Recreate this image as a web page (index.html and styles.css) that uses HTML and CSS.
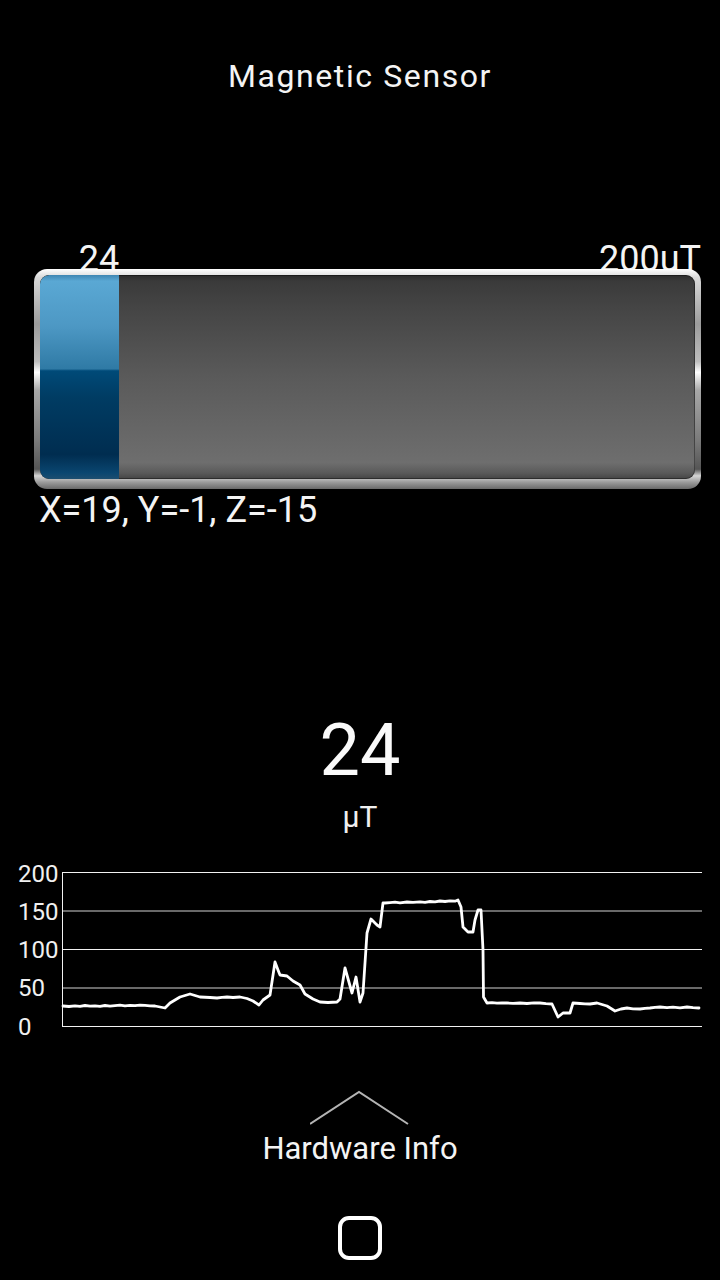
FILE: index.html
```html
<!DOCTYPE html>
<html>
<head>
<meta charset="utf-8">
<title>Magnetic Sensor</title>
<link rel="stylesheet" href="styles.css">
</head>
<body>
<main class="screen">
  <h1 class="title">Magnetic Sensor</h1>

  <section class="meter">
    <div class="meter-labels">
      <span class="meter-value" style="width:12%">24</span>
      <span class="meter-max">200uT</span>
    </div>
    <div class="frame">
      <div class="track">
        <div class="fill" style="width:12%"></div>
      </div>
    </div>
    <div class="axes">X=19, Y=-1, Z=-15</div>
  </section>

  <section class="reading">
    <div class="reading-value">24</div>
    <div class="reading-unit">µT</div>
  </section>

  <svg class="chart" viewBox="0 855 720 185" width="720" height="185">
    <g class="chart-labels">
      <text x="18" y="882">200</text>
      <text x="18" y="920">150</text>
      <text x="18" y="958">100</text>
      <text x="18" y="996">50</text>
      <text x="18" y="1035">0</text>
    </g>
    <line class="grid-major" x1="62" y1="872.5" x2="702" y2="872.5"/>
    <line class="grid-minor" x1="62" y1="911" x2="702" y2="911"/>
    <line class="grid-major" x1="62" y1="949.5" x2="702" y2="949.5"/>
    <line class="grid-minor" x1="62" y1="988" x2="702" y2="988"/>
    <line class="grid-major" x1="62" y1="1026.5" x2="702" y2="1026.5"/>
    <line class="grid-major" x1="62.5" y1="872" x2="62.5" y2="1027"/>
    <polyline class="trace" points="63,1006 69,1006.5 75,1005.8 80,1006.4 85,1005.5 90,1006.2 95,1005.8 100,1006.3 105,1005.5 110,1006.1 115,1005.7 120,1005.2 125,1005.8 130,1005.3 135,1005.7 140,1005.1 145,1005.4 150,1005.8 155,1006 160,1007 165,1008 170,1003 180,997 185,995.5 190,994 195,995.5 200,997 210,997.5 217,998 222,997.3 227,997 233,997.5 240,997 247,998.5 253,1001 259,1005 263,1000 270,995 275,962 278,970 280,975 287,976 293,981 300,985 305,994 313,999 320,1002 328,1002.5 337,1002 340,999 345,968 352,993 356,977 360,1002 363,993 367,933 371,919 377,925 380,927 383,903 385,903 390,902.6 395,902.2 400,902.8 407,902 413,902.4 420,901.8 425,902.3 430,901.5 435,901.9 440,901 445,901.5 450,900.8 455,901.2 458,900 461,907 463,927 468,932 473,932 475,920 478,910 481,910 483,950 483.5,997 487,1003 492,1002.6 497,1003.1 502,1002.8 507,1003 513,1003.4 520,1003 527,1003.5 534,1002.9 540,1003 546,1003.6 552,1004 558,1017 563,1013 570,1013 573,1003 580,1003.5 585,1003.9 590,1004 597,1003 602,1004.5 607,1006 615,1011 621,1009 627,1008 633,1008.8 640,1009 645,1008.3 650,1008 655,1007.4 660,1007 667,1007.6 673,1007.2 680,1007.8 687,1007 693,1007.6 699,1008"/>
  </svg>

  <section class="drawer">
    <svg class="chevron" viewBox="0 0 100 40" width="100" height="40">
      <polyline points="0,36 49,4 98,36"/>
    </svg>
    <div class="drawer-label">Hardware Info</div>
  </section>

  <nav class="navbar">
    <div class="home-btn"></div>
  </nav>
</main>
</body>
</html>
```

FILE: styles.css
```css
html, body {
  margin: 0;
  padding: 0;
  background: #000;
}

body {
  font-family: Roboto, "Noto Sans", "Liberation Sans", sans-serif;
  color: #fff;
  width: 720px;
  height: 1280px;
  overflow: hidden;
}

.screen {
  display: flex;
  flex-direction: column;
}

.title {
  margin: 56px 0 0;
  font-size: 32px;
  line-height: 40px;
  font-weight: 400;
  letter-spacing: 1.6px;
  text-align: center;
  color: #f4f4f4;
}

/* meter */
.meter {
  display: flex;
  flex-direction: column;
}

.meter-labels {
  margin: 143px 19px 0 40px;
  display: flex;
  justify-content: space-between;
  font-size: 36px;
  line-height: 40px;
  color: #f4f4f4;
}

.meter-value {
  text-align: right;
}

.frame {
  position: relative;
  margin: -10px 19px 0 34px;
  height: 220px;
  box-sizing: border-box;
  padding: 6px 6px 10px 6px;
  border-radius: 13px;
  background: linear-gradient(to bottom,
    #ffffff 0%, #d8d8d8 4%, #9c9c9c 25%, #bdbdbd 42%,
    #ffffff 47%, #a8a8a8 55%, #7a7a7a 78%,
    #555 91%, #d6d6d6 94%, #9a9a9a 97%, #6a6a6a 100%);
}

.track {
  height: 100%;
  border-radius: 9px;
  overflow: hidden;
  background: linear-gradient(to bottom, #2c2c2c 0%, #3a3a3a 3%, #444 15%, #5a5a5a 50%, #6e6e6e 92%, #5a5a5a 97%, #444 100%);
  box-shadow: inset 0 0 0 1px rgba(0, 0, 0, 0.35);
}

.fill {
  height: 100%;
  border-radius: 9px 0 0 9px;
  background: linear-gradient(to bottom,
    #3f86b2 0%, #5aa8d4 3%, #4d98c4 25%, #2f7aa5 46%,
    #004a78 47%, #003c63 60%, #002d50 88%, #0a4670 97%, #1c4e70 100%);
}

.axes {
  margin: 1px 0 0 39px;
  font-size: 36px;
  line-height: 40px;
  color: #f4f4f4;
}

/* big reading */
.reading {
  display: flex;
  flex-direction: column;
  align-items: center;
}

.reading-value {
  margin-top: 181px;
  font-size: 72px;
  line-height: 80px;
  color: #fafafa;
}

.reading-unit {
  margin-top: 8px;
  font-size: 30px;
  line-height: 36px;
  color: #f0f0f0;
}

/* chart */
.chart {
  display: block;
  margin-top: 20px;
}

.chart-labels text {
  font-family: Roboto, "Noto Sans", "Liberation Sans", sans-serif;
  font-size: 24px;
  fill: #f0f0f0;
}

.grid-major {
  stroke: #f2f2f2;
  stroke-width: 1;
}

.grid-minor {
  stroke: #8c8c8c;
  stroke-width: 1.6;
}

.trace {
  fill: none;
  stroke: #fff;
  stroke-width: 2.8;
  stroke-linejoin: round;
  stroke-linecap: round;
}

/* drawer */
.drawer {
  display: flex;
  flex-direction: column;
  align-items: center;
}

.chevron {
  display: block;
  margin-top: 48px;
}

.chevron polyline {
  fill: none;
  stroke: #b4b4b4;
  stroke-width: 2;
}

.drawer-label {
  margin-top: 3px;
  font-size: 31px;
  line-height: 36px;
  color: #f4f4f4;
}

/* nav bar */
.navbar {
  display: flex;
  justify-content: center;
}

.home-btn {
  margin-top: 49px;
  width: 44px;
  height: 44px;
  box-sizing: border-box;
  border: 4.5px solid #fff;
  border-radius: 11px;
}
```
